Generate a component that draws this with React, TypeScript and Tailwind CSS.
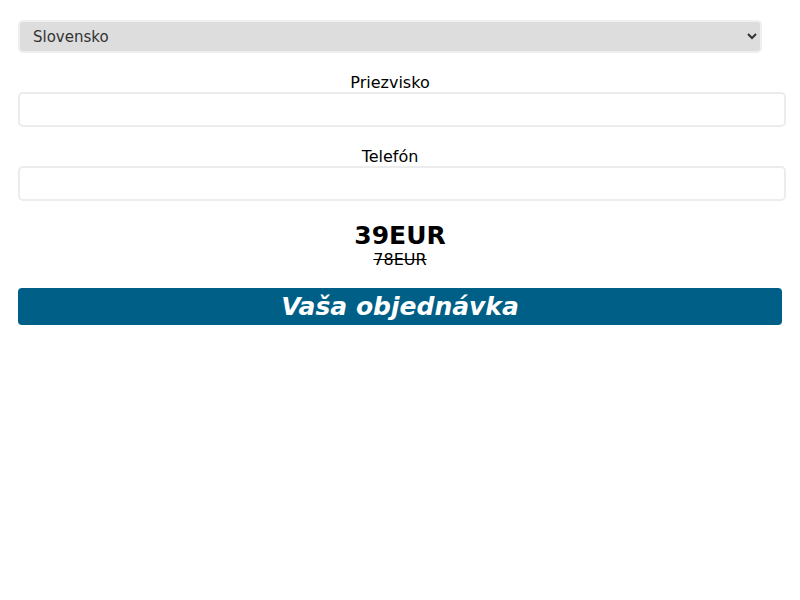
import { useState } from "react";

const font = { fontFamily: '"DejaVu Sans", sans-serif' };

const Field = ({ label }: { label: string }) => {
  const [value, setValue] = useState("");
  return (
    <div className="flex flex-col mt-[21px]">
      <label className="w-[744px] text-center text-[16px] leading-[19px] text-black">{label}</label>
      <input
        value={value}
        onChange={(e) => setValue(e.target.value)}
        className="h-[35px] w-[768px] border-2 border-[#ececec] rounded-[5px] bg-white px-2 outline-none"
      />
    </div>
  );
};

export default function App() {
  const [country, setCountry] = useState("SK");

  return (
    <div className="w-[800px] h-[600px] bg-white px-[18px] pt-[20px]" style={font}>
      <select
        value={country}
        onChange={(e) => setCountry(e.target.value)}
        className="block h-[33px] w-[744px] border-2 border-[#efefef] rounded-[5px] bg-[#dddddd] pl-[9px] pr-[6px] text-[15px] text-[#333] outline-none"
        style={font}
      >
        <option value="SK">Slovensko</option>
        <option value="CZ">Česko</option>
      </select>

      <div className="mt-[-1px]">
        <Field label="Priezvisko" />
        <div className="mt-[-1px]">
          <Field label="Telefón" />
        </div>
      </div>

      <div className="flex flex-col items-center mt-[20px] w-[764px]">
        <div className="text-[25px] leading-[30px] font-bold text-black">39EUR</div>
        <div className="text-[16px] leading-[18px] line-through text-black">78EUR</div>
      </div>

      <button className="mt-[19px] h-[37px] w-[764px] rounded-[4px] bg-[#005f87] text-white text-[25px] font-bold italic leading-[37px]">
        Vaša objednávka
      </button>
    </div>
  );
}
